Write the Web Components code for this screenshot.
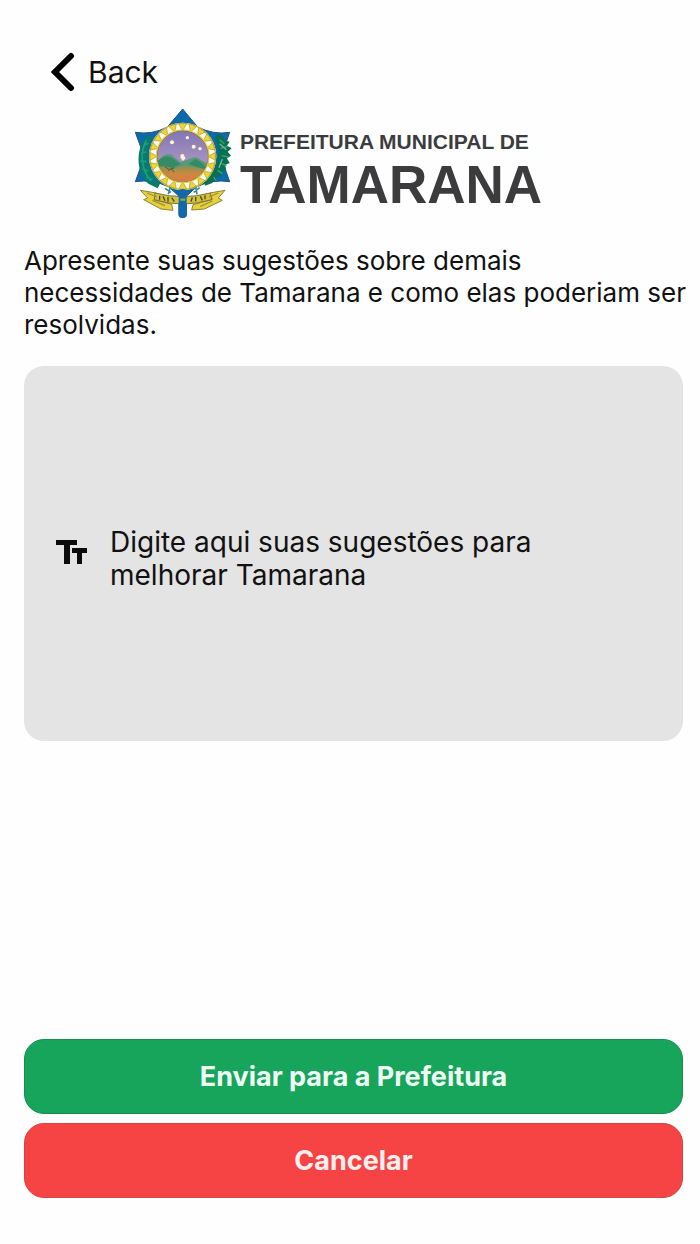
<!DOCTYPE html>
<html lang="pt-BR">
<head>
<meta charset="utf-8">
<meta name="viewport" content="width=device-width, initial-scale=1">
<title>Sugestões - Tamarana</title>
<style>
body {
  margin: 0;
  background: #fefefe;
  color: #111;
  font-family: Inter, Roboto, sans-serif;
}
</style>
</head>
<body>
<suggestion-page>
  <back-button slot='top'>Back</back-button>
  <city-logo slot='logo'>
    <span slot='over'>PREFEITURA MUNICIPAL DE</span>
    <span slot='name'>TAMARANA</span>
  </city-logo>
  <span slot='intro'>Apresente suas sugestões sobre demais necessidades de Tamarana e como elas poderiam ser resolvidas.</span>
  <text-field slot='field' label='Sugestões' placeholder='Digite aqui suas sugestões para melhorar Tamarana'></text-field>
  <action-button slot='actions' kind='send'>Enviar para a Prefeitura</action-button>
  <action-button slot='actions' kind='cancel'>Cancelar</action-button>
</suggestion-page>
</body>
<script>
class BaseElement extends HTMLElement {
  constructor() { super()
    let t = document.createElement('template')
    t.innerHTML = this.constructor.tpl
    this.attachShadow({mode: 'open'}).appendChild(t.content.cloneNode(true))
  }
  $(s){
    return this.shadowRoot.querySelector(s)
  }
}

class SuggestionPage extends BaseElement {
  static tpl = `
<style>
:host {
  display: flex;
  flex-direction: column;
  box-sizing: border-box;
  min-height: 100vh;
  padding: 48px 8px 46px 24px;
}
header {
  display: flex;
  padding-left: 24px;
}
.logo {
  display: flex;
  justify-content: center;
  padding: 12px 40px 0 0;
}
p {
  margin: 26px 0 0;
  font-size: 26px;
  line-height: 32px;
}
main {
  padding: 25px 9px 0 0;
}
footer {
  display: grid;
  gap: 9px;
  margin-top: auto;
  padding: 24px 9px 0 0;
}
</style>
<header><slot name='top'></slot></header>
<div class='logo'><slot name='logo'></slot></div>
<p><slot name='intro'></slot></p>
<main><slot name='field'></slot></main>
<footer><slot name='actions'></slot></footer>
`
}

class BackButton extends BaseElement {
  static tpl = `
<style>
:host { display: block; }
button {
  display: flex;
  align-items: center;
  gap: 12px;
  padding: 0;
  border: none;
  background: none;
  color: inherit;
  font: 30px/48px Inter, Roboto, sans-serif;
  cursor: pointer;
}
svg {
  width: 28px;
  height: 40px;
}
</style>
<button type='button'>
  <svg viewBox='0 0 28 40' fill='none' stroke='#000' stroke-width='6' stroke-linecap='round' stroke-linejoin='miter' aria-hidden='true'>
    <path d='M23 4 L7 20 L23 36'/>
  </svg>
  <slot></slot>
</button>
`
}

class CityLogo extends BaseElement {
  static tpl = `
<style>
:host {
  display: flex;
  gap: 8px;
  color: #3c3c3e;
  font-family: "Liberation Sans", Arial, sans-serif;
  font-weight: bold;
  white-space: nowrap;
}
svg {
  flex: none;
  width: 98px;
  height: 111px;
}
.words {
  display: flex;
  flex-direction: column;
  padding-top: 22px;
}
.words slot {
  display: block;
}
.over {
  font-size: 21px;
  line-height: 24px;
}
.name {
  font-size: 53px;
  line-height: 62px;
}
</style>
<svg viewBox='45 25 294 333' aria-hidden='true'>
  <defs>
    <clipPath id='disc'><circle cx='191' cy='170' r='76'/></clipPath>
    <linearGradient id='sky' x1='0' y1='0' x2='0' y2='1'>
      <stop offset='0' stop-color='#8175b4'/>
      <stop offset='1' stop-color='#c3a5c9'/>
    </linearGradient>
    <linearGradient id='land' x1='0' y1='0' x2='0' y2='1'>
      <stop offset='0' stop-color='#849254'/>
      <stop offset='.5' stop-color='#cf8741'/>
      <stop offset='1' stop-color='#d97a3c'/>
    </linearGradient>
  </defs>
  <!-- star -->
  <path fill='#0a6aac' stroke='#25537f' stroke-width='3' d='M191 28 L236 82 Q284 106 332 98 L306 172 L332 246 Q280 238 232 262 L191 300 L150 262 Q100 238 49 246 L76 172 L49 98 Q100 106 145 82 Z'/>
  <rect x='178' y='255' width='26' height='100' rx='12' fill='#1268a8'/>
  <!-- branches -->
  <path fill='#087a70' d='M88 106 C50 136 48 218 88 252 L116 266 L124 250 C86 218 78 160 98 116 Z'/>
  <path fill='none' stroke='#19a07b' stroke-width='5' d='M82 122 C62 156 66 210 96 244 M74 138 l14 -8 M66 160 l16 -3 M64 184 l18 2 M70 208 l18 6 M82 232 l18 8'/>
  <path fill='#0b7053' d='M296 104 l16 4 4 14 16 4 -8 12 14 8 -12 10 10 12 -12 8 8 14 -14 6 4 14 -16 6 0 14 -18 4 -8 16 -22 8 -4 -16 C302 208 306 150 288 116 Z'/>
  <path fill='none' stroke='#39a66d' stroke-width='4' d='M302 120 l14 12 M304 146 l22 -6 M308 168 l20 4 M304 190 l18 8 M296 212 l14 10 M284 232 l8 12'/>
  <path fill='none' stroke='#70b6a5' stroke-width='4' d='M302 132 l20 18 M310 178 l-10 26'/>
  <!-- ring -->
  <circle cx='191' cy='170' r='101' fill='#fdfdf4'/>
  <circle cx='191' cy='170' r='99' fill='none' stroke='#c9b93f' stroke-width='4'/>
  <g id='rays' fill='#f1d62f' stroke='#a39440' stroke-width='2'></g>
  <circle cx='191' cy='170' r='81' fill='#e6d03c'/>
  <circle cx='191' cy='170' r='76' fill='none' stroke='#76643f' stroke-width='3'/>
  <g clip-path='url(#disc)'>
    <rect x='113' y='92' width='156' height='156' fill='url(#sky)'/>
    <path fill='#559b79' d='M110 190 Q140 155 158 166 L184 188 L218 176 Q232 168 246 182 L272 194 V250 H110 Z'/>
    <path fill='#378b64' d='M112 188 Q140 160 160 176 L186 194 L160 204 L112 204 Z M208 192 L230 178 L248 190 L268 210 L232 202 Z'/>
    <path fill='url(#land)' d='M110 204 Q138 194 164 208 Q192 190 218 202 Q248 202 272 220 V250 H110 Z'/>
    <path fill='none' stroke='#4f613c' stroke-width='3' d='M138 202 l14 8 14 -6 M148 214 l8 -8 10 12'/>
    <path fill='#eef3e7' d='M184 174 l8 -10 8 12 -8 8 Z'/>
    <g fill='#fff4d2'>
      <circle cx='159' cy='128' r='6'/><circle cx='205' cy='114' r='5'/>
      <circle cx='224' cy='141' r='6'/><circle cx='243' cy='147' r='5'/>
      <circle cx='190' cy='169' r='6'/>
    </g>
  </g>
  <!-- ribbon -->
  <path fill='none' stroke='#348f83' stroke-width='5' d='M138 266 l18 12 M154 262 l-6 22 M224 278 l18 -14 M230 262 l4 22'/>
  <path fill='#e6d03c' stroke='#8d8435' stroke-width='3' d='M64 272 L112 280 L105 300 L158 314 L162 332 L126 328 L74 300 L86 295 Z M318 272 L272 280 L280 299 L222 315 L218 331 L256 328 L310 302 L298 295 Z'/>
  <path fill='#d5c238' stroke='#777335' stroke-width='3' d='M108 280 Q191 302 274 280 L278 300 Q191 326 106 300 Z'/>
  <path fill='none' stroke='#44482a' stroke-width='4' d='M122 288 v12 M132 290 l6 13 M147 292 v14 M158 294 l8 12 M216 306 l4 -13 M230 292 v13 M244 290 l6 12 M258 287 v12'/>
  <path fill='none' stroke='#9c9238' stroke-width='4' d='M84 280 l30 12 M100 302 l38 16 M298 280 l-28 12 M280 304 l-36 16'/>
  <rect x='179' y='268' width='24' height='86' rx='11' fill='#1268a8'/>
  <path d='M184 300 H199' stroke='#87a752' stroke-width='7'/>
</svg>
<div class='words'>
  <slot class='over' name='over'></slot>
  <slot class='name' name='name'></slot>
</div>
`
  constructor() { super()
    // triangles around the disc
    let p = ''
    let n = 20
    let at = (r,a)=>`${(191 + r*Math.cos(a)).toFixed(1)} ${(170 + r*Math.sin(a)).toFixed(1)}`
    for(let i = 0; i < n; i++){
      let a = i/n*Math.PI*2
      p += `<path d='M${at(76,a)} L${at(99,a-0.12)} L${at(99,a+0.12)} Z'/>`
    }
    this.$('#rays').innerHTML = p
  }
}

class TextField extends BaseElement {
  static tpl = `
<style>
:host { display: block; }
.box {
  display: flex;
  align-items: center;
  gap: 22px;
  box-sizing: border-box;
  min-height: 375px;
  padding: 10px 48px 0 32px;
  border-radius: 20px;
  background: #e4e4e4;
}
label {
  display: flex;
  flex: none;
  padding-bottom: 12px;
}
svg {
  width: 32px;
  height: 26px;
}
textarea {
  flex: 1;
  min-width: 0;
  padding: 0;
  border: none;
  outline: none;
  resize: none;
  overflow: hidden;
  background: none;
  color: inherit;
  font: 28px/33px Inter, Roboto, sans-serif;
}
textarea::placeholder {
  color: #111;
  opacity: 1;
}
</style>
<div class='box'>
  <label for='t'>
    <svg viewBox='0 0 32 26' fill='#0b0b0b' aria-hidden='true'>
      <path d='M0 0 H21 V5 H14 V24 H8 V5 H0 Z M16 8 H31 V13 H26 V24 H21 V13 H16 Z'/>
    </svg>
  </label>
  <textarea id='t' rows='2'></textarea>
</div>
`
  connectedCallback(){
    let t = this.$('#t')
    t.placeholder = this.getAttribute('placeholder') || ''
    t.setAttribute('aria-label', this.getAttribute('label') || '')
  }
}

class ActionButton extends BaseElement {
  static tpl = `
<style>
:host {
  display: block;
  --bg: #17a45b;
  --edge: #168c50;
}
:host([kind=cancel]) {
  --bg: #f64444;
  --edge: #d34347;
}
button {
  display: block;
  box-sizing: border-box;
  width: 100%;
  height: 75px;
  border: 1px solid var(--edge);
  border-radius: 20px;
  background: var(--bg);
  color: #effff5;
  font: bold 27px/32px Inter, Roboto, sans-serif;
  cursor: pointer;
}
:host([kind=cancel]) button {
  color: #fff0f0;
}
</style>
<button type='button'><slot></slot></button>
`
}

customElements.define('suggestion-page',SuggestionPage)
customElements.define('back-button',BackButton)
customElements.define('city-logo',CityLogo)
customElements.define('text-field',TextField)
customElements.define('action-button',ActionButton)
</script>
</html>
